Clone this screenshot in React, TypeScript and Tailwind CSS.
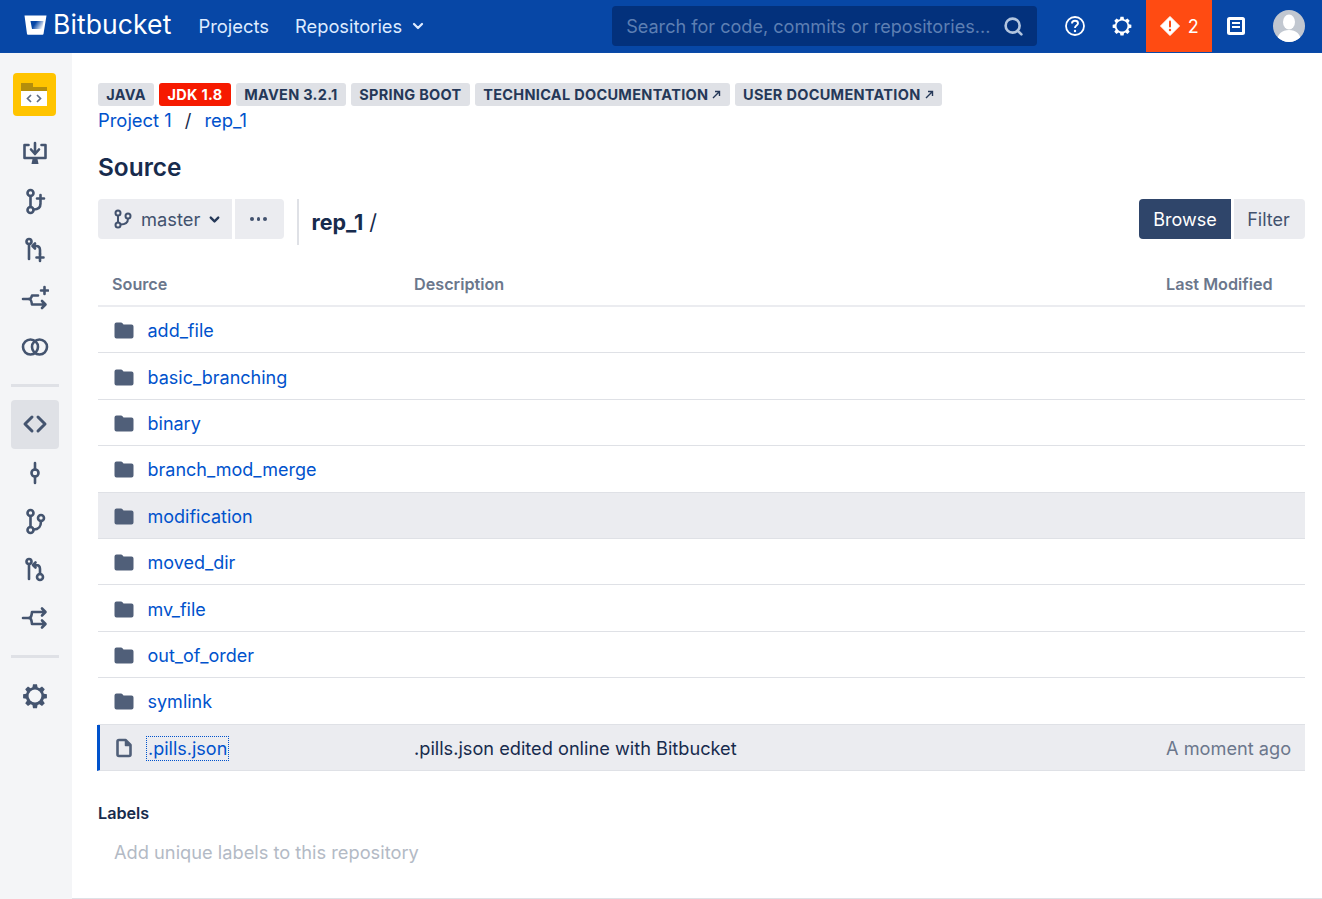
import { ChevronDown, Search } from "lucide-react";
import type { ReactNode } from "react";

const FONT = "[font-family:Inter,'Liberation_Sans',sans-serif]";

const TAGS = [
  { label: "JAVA" },
  { label: "JDK 1.8", red: true },
  { label: "MAVEN 3.2.1" },
  { label: "SPRING BOOT" },
  { label: "TECHNICAL DOCUMENTATION", external: true },
  { label: "USER DOCUMENTATION", external: true },
];

const FOLDERS = [
  "add_file",
  "basic_branching",
  "binary",
  "branch_mod_merge",
  "modification",
  "moved_dir",
  "mv_file",
  "out_of_order",
  "symlink",
];

const GEAR =
  "M10.3 2h3.4l.5 2.6 1.6.7 2.2-1.5 2.4 2.4-1.5 2.2.7 1.6 2.6.5v3.4l-2.6.5-.7 1.6 1.5 2.2-2.4 2.4-2.2-1.5-1.6.7-.5 2.6h-3.4l-.5-2.6-1.6-.7-2.2 1.5-2.4-2.4 1.5-2.2-.7-1.6-2.6-.5v-3.4l2.6-.5.7-1.6-1.5-2.2 2.4-2.4 2.2 1.5 1.6-.7z";

function NavIcon({ children, size = 28 }: { children: ReactNode; size?: number }) {
  return (
    <svg
      width={size}
      height={size}
      viewBox="0 0 28 28"
      fill="none"
      stroke="#44546F"
      strokeWidth="2.600"
      strokeLinecap="round"
      strokeLinejoin="round"
    >
      {children}
    </svg>
  );
}

function SidebarItem({ children, active }: { children: ReactNode; active?: boolean }) {
  return (
    <div className={`flex h-[48.500px] w-12 items-center justify-center rounded-[4px] ${active ? "bg-[#DFE1E6]" : ""}`}>
      {children}
    </div>
  );
}

function Sidebar() {
  return (
    <aside className="flex w-[72px] shrink-0 flex-col items-center bg-[#F4F5F7] pt-5 pr-[2px]">
      <div className="mr-[2px] flex h-[43px] w-[43px] items-center justify-center rounded-[4px] bg-[#FFC400]">
        <svg width="28" height="26" viewBox="0 0 28 26">
          <path d="M1 1h12v4h14v4H1z" fill="#B58E0C" />
          <rect x="1" y="9" width="26" height="15" fill="#fff" />
          <path d="M11 13l-3.500 3.500L11 20M17 13l3.500 3.500L17 20" fill="none" stroke="#5E6C84" strokeWidth="1.700" />
        </svg>
      </div>
      <div className="mt-[12.500px] flex flex-col items-center">
        <SidebarItem>
          <NavIcon>
            <path d="M7.500 6H3.500v13h21V6h-4" />
            <path d="M14 4v10M10 10.500l4 4.500 4-4.500" />
            <path d="M10.500 25h7l-1-5h-5z" fill="#44546F" stroke="none" />
          </NavIcon>
        </SidebarItem>
        <SidebarItem>
          <NavIcon>
            <circle cx="9.500" cy="6" r="3" />
            <circle cx="9.500" cy="23" r="3" />
            <path d="M9.500 9v11M12.500 22.500c5 0 7-2 7-6" />
            <path d="M16 11.500h7M19.500 8v7" />
          </NavIcon>
        </SidebarItem>
        <SidebarItem>
          <NavIcon>
            <circle cx="8" cy="5.500" r="2.500" />
            <path d="M8 8v15" />
            <path d="M14 7.500l-2.500 2.500 2.500 2.500M12 10h3c3 0 4 1.500 4 4v4" />
            <path d="M15.500 21.500h7M19 18v7" />
          </NavIcon>
        </SidebarItem>
        <SidebarItem>
          <NavIcon>
            <path d="M2 15h6c2 0 2.500-1.500 3-3.500h6" />
            <path d="M20 6.500h7M23.500 3v7" />
            <path d="M8 15c2 0 2.500 1.500 3 5.500h13M21 17l3.500 3.500L21 24" />
          </NavIcon>
        </SidebarItem>
        <SidebarItem>
          <NavIcon>
            <circle cx="9.500" cy="14" r="7.500" />
            <circle cx="18.500" cy="14" r="7.500" />
          </NavIcon>
        </SidebarItem>
      </div>
      <div className="mt-[12.500px] h-[3px] w-12 bg-[#DFE1E6]" />
      <div className="mt-[13.500px] flex flex-col items-center">
        <SidebarItem active>
          <NavIcon>
            <path d="M11 7l-7 7 7 7M17 7l7 7-7 7" strokeWidth="3" />
          </NavIcon>
        </SidebarItem>
        <SidebarItem>
          <NavIcon>
            <circle cx="14" cy="14" r="3.500" />
            <path d="M14 4v6.500M14 17.500V24" />
          </NavIcon>
        </SidebarItem>
        <SidebarItem>
          <NavIcon>
            <circle cx="9.500" cy="6" r="3" />
            <circle cx="9.500" cy="23" r="3" />
            <circle cx="20" cy="11" r="3" />
            <path d="M9.500 9v11M12.500 22.500c5 0 7.500-2 7.500-8.500" />
          </NavIcon>
        </SidebarItem>
        <SidebarItem>
          <NavIcon>
            <circle cx="8" cy="5.500" r="2.500" />
            <path d="M8 8v15" />
            <path d="M14.500 6.500L12 9l2.500 2.500M12.500 9h2.500c3 0 4 1.500 4 4v5" />
            <circle cx="19" cy="21" r="3" />
          </NavIcon>
        </SidebarItem>
        <SidebarItem>
          <NavIcon>
            <path d="M2 14h6c2 0 2.500-1.500 3-6h13M21 4.500L24.500 8 21 11.500" />
            <path d="M8 14c2 0 2.500 1.500 3 6h13M21 16.500l3.500 3.500-3.500 3.500" />
          </NavIcon>
        </SidebarItem>
      </div>
      <div className="mt-[12.500px] h-[3px] w-12 bg-[#DFE1E6]" />
      <div className="mt-[13.500px]">
        <SidebarItem>
          <svg width="28" height="28" viewBox="0 0 24 24" fill="none">
            <path d={GEAR} fill="#44546F" />
            <circle cx="12" cy="12" r="5.500" fill="#F4F5F7" />
          </svg>
        </SidebarItem>
      </div>
    </aside>
  );
}

function Header() {
  return (
    <header className="flex h-[53px] shrink-0 items-center border-b border-[#0A4AA8] bg-[#0747A6] text-white">
      <svg className="mb-[2px] ml-[24px]" width="23" height="20" viewBox="0 0 23 20">
        <defs>
          <linearGradient id="bucket" x1="0" y1="0.300" x2="1" y2="0.700">
            <stop offset="0.300" stopColor="#0747A6" />
            <stop offset="1" stopColor="#fff" />
          </linearGradient>
        </defs>
        <path d="M0.500 0.500h22l-3 18.500a1 1 0 0 1-1 .7H4a1 1 0 0 1-1-.7z" fill="#fff" />
        <path d="M6.500 6h13l-1.200 8H8z" fill="url(#bucket)" />
      </svg>
      <span className="mb-[4px] ml-[6px] text-[26.500px] leading-none font-normal tracking-[0.100px]">Bitbucket</span>
      <span className="ml-[27px] pt-[2px] text-[18.400px] text-[#DEEBFF]">Projects</span>
      <span className="ml-[26px] pt-[2px] text-[18.300px] text-[#DEEBFF]">Repositories</span>
      <ChevronDown className="ml-[8px]" size={16} strokeWidth={3.400} color="#DEEBFF" />
      <div className="ml-[186px] flex h-[40px] w-[425px] items-center justify-between rounded-[4px] bg-[#03317C] pr-[13px] pl-[14px]">
        <span className="pt-[2px] text-[18.100px] text-[#5D7FB3]">Search for code, commits or repositories...</span>
        <Search size={21} strokeWidth={3} color="#B3C5DF" />
      </div>
      <div className="ml-[27px] flex w-[22px] justify-center">
        <svg width="22" height="22" viewBox="0 0 22 22" fill="none" stroke="#fff">
          <circle cx="11" cy="11" r="9" strokeWidth="1.800" />
          <path d="M8 8.500c0-1.700 1.300-2.700 3-2.700s3 1 3 2.500c0 2.400-3 2.200-3 4.700" strokeWidth="1.900" />
          <circle cx="11" cy="16" r="1.200" fill="#fff" stroke="none" />
        </svg>
      </div>
      <div className="ml-[25px] flex w-[22px] justify-center">
        <svg width="22" height="22" viewBox="0 0 24 24">
          <path d={GEAR} fill="#fff" />
          <circle cx="12" cy="12" r="6" fill="#0747A6" />
        </svg>
      </div>
      <div className="ml-[13px] flex h-[52px] w-[66px] items-center justify-center gap-[8px] bg-[#FF4B12]">
        <svg width="20" height="20" viewBox="0 0 20 20">
          <path d="M10 0.500l9.500 9.500-9.500 9.500L0.500 10z" fill="#fff" strokeLinejoin="round" stroke="#fff" />
          <rect x="9" y="4.500" width="2" height="7" rx="1" fill="#FF4B12" />
          <circle cx="10" cy="14" r="1.200" fill="#FF4B12" />
        </svg>
        <span className="text-[18px]">2</span>
      </div>
      <div className="ml-[14px] flex w-[20px] justify-center">
        <svg width="20" height="20" viewBox="0 0 20 20">
          <rect x="1" y="1" width="18" height="18" rx="2.500" fill="#fff" />
          <rect x="4" y="4" width="12" height="12" fill="#0747A6" />
          <rect x="6" y="6" width="8" height="2" fill="#fff" />
          <rect x="6" y="10" width="8" height="2" fill="#fff" />
        </svg>
      </div>
      <div className="ml-[27px] h-[32px] w-[32px] overflow-hidden rounded-full bg-[#C1C7D0]">
        <svg width="32" height="32" viewBox="0 0 32 32">
          <ellipse cx="16" cy="12" rx="6" ry="7.500" fill="#fff" />
          <path d="M4 32c0-8 5-12 12-12s12 4 12 12z" fill="#fff" />
        </svg>
      </div>
    </header>
  );
}

function Tag({ label, red, external }: { label: string; red?: boolean; external?: boolean }) {
  return (
    <span
      className={`flex h-[23px] items-center gap-[4px] rounded-[3px] px-[8.200px] text-[14.500px] font-bold tracking-[0.300px] ${
        red ? "bg-[#F61A00] text-white" : "bg-[#DFE1E6] text-[#253858]"
      }`}
    >
      {label}
      {external && (
        <svg width="9" height="9" viewBox="0 0 9 9" fill="none" stroke="#253858" strokeWidth="1.400">
          <path d="M1 8l6.500-6.500M3 1.500h4.500V6" />
        </svg>
      )}
    </span>
  );
}

function FolderIcon() {
  return (
    <svg width="20" height="17" viewBox="0 0 20 17">
      <path
        d="M2.500 0.500h4.500a2 2 0 0 1 1.500.7l1 1.300h8a2 2 0 0 1 2 2v10a2 2 0 0 1-2 2h-15a2 2 0 0 1-2-2v-12a2 2 0 0 1 2-2z"
        fill="#505F79"
      />
    </svg>
  );
}

function FolderRow({ name, hover }: { name: string; hover?: boolean }) {
  return (
    <div
      className={`flex h-[46.400px] items-center border-b border-[#DFE1E6] pt-[2px] pl-[15.500px] ${hover ? "bg-[#EBECF0]" : ""}`}
    >
      <FolderIcon />
      <a className="ml-[14px] text-[18px] text-[#0052CC]">{name}</a>
    </div>
  );
}

export default function App() {
  return (
    <div className={`flex h-[899px] w-[1322px] flex-col overflow-hidden bg-white ${FONT}`}>
      <Header />
      <div className="flex min-h-0 flex-1">
        <Sidebar />
        <main className="min-w-0 flex-1 border-b border-[#DFE1E6] pt-[30px] pr-[17px] pl-[26px]">
          <div className="flex gap-[5.300px]">
            {TAGS.map((t) => (
              <Tag key={t.label} {...t} />
            ))}
          </div>
          <div className="flex h-[28px] items-center pt-[2px] text-[18.400px] text-[#172B4D]">
            <a className="text-[#0052CC]">Project 1</a>
            <span className="mx-[13px]">/</span>
            <a className="text-[#0052CC]">rep_1</a>
          </div>
          <h1 className="mt-[16px] text-[24.400px] leading-[34px] font-semibold text-[#172B4D]">Source</h1>
          <div className="mt-[15px] flex h-[40px]">
            <div className="flex w-[134px] items-center rounded-l-[4px] bg-[#EBECF0] pl-[15px] text-[18.300px] text-[#42526E]">
              <svg width="20" height="20" viewBox="0 0 20 20" fill="none" stroke="#42526E" strokeWidth="2">
                <circle cx="5" cy="4" r="2.500" />
                <circle cx="5" cy="16" r="2.500" />
                <circle cx="15" cy="7" r="2.500" />
                <path d="M5 6.500v7M7.500 15.500c5 0 7.500-2.500 7.500-6" />
              </svg>
              <span className="ml-[8px] pt-[2px]">master</span>
              <ChevronDown className="ml-[7px]" size={15} strokeWidth={3.800} color="#253858" />
            </div>
            <div className="ml-[2.500px] flex w-[49px] items-center justify-center gap-[3px] rounded-r-[4px] bg-[#EBECF0] pr-[1px]">
              <span className="h-[3.500px] w-[3.500px] rounded-full bg-[#42526E]" />
              <span className="h-[3.500px] w-[3.500px] rounded-full bg-[#42526E]" />
              <span className="h-[3.500px] w-[3.500px] rounded-full bg-[#42526E]" />
            </div>
            <div className="ml-[13px] h-[46px] w-[2px] bg-[#DFE1E6]" />
            <div className="ml-[13px] flex items-center pt-[7px] text-[21.500px] text-[#172B4D]">
              <span className="font-bold">rep_1</span>
              <span className="ml-[6px]">/</span>
            </div>
            <div className="ml-auto flex">
              <div className="flex w-[92px] items-center justify-center rounded-l-[4px] bg-[#2F456A] text-[18px] text-white">
                Browse
              </div>
              <div className="ml-[3px] flex w-[71px] items-center justify-center rounded-r-[4px] bg-[#EBECF0] pr-[2px] text-[18px] text-[#42526E]">
                Filter
              </div>
            </div>
          </div>
          <div className="mt-[22px] grid h-[46px] grid-cols-[302px_1fr_139px] items-center border-b-2 border-[#EBECF0] pt-[3px] text-[16.200px] font-semibold text-[#6B778C]">
            <span className="pl-[14px]">Source</span>
            <span className="pl-[14px]">Description</span>
            <span>Last Modified</span>
          </div>
          {FOLDERS.map((name) => (
            <FolderRow key={name} name={name} hover={name === "modification"} />
          ))}
          <div className="-ml-[1px] grid h-[46.400px] grid-cols-[303px_1fr_139px] items-center border-b border-l-[3px] border-[#DFE1E6] border-l-[#0052CC] bg-[#EBECF0] pt-[2px] text-[18.200px]">
            <div className="flex items-center pl-[14px]">
              <svg width="20" height="20" viewBox="0 0 20 20" fill="none" stroke="#505F79" strokeWidth="2.600" strokeLinejoin="round">
                <path d="M3.500 3.500a1.500 1.500 0 0 1 1.500-1.500h6.500l5 5v9.500a1.500 1.500 0 0 1-1.500 1.500h-10a1.500 1.500 0 0 1-1.500-1.500z" />
                <path d="M11.500 2.500v5h4.500" fill="#505F79" strokeWidth="1.500" />
              </svg>
              <a className="ml-[12px] border border-dotted border-[#0052CC] px-[1px] text-[18px] leading-[23px] text-[#0052CC]">
                .pills.json
              </a>
            </div>
            <span className="pl-[11px] text-[#172B4D]">.pills.json edited online with Bitbucket</span>
            <span className="text-[#6B778C]">A moment ago</span>
          </div>
          <div className="mt-[32px] text-[16.200px] leading-[20px] font-semibold text-[#172B4D]">Labels</div>
          <div className="mt-[19px] pl-[16px] text-[18.250px] leading-[20px] text-[#B3BAC5]">
            Add unique labels to this repository
          </div>
        </main>
      </div>
    </div>
  );
}
